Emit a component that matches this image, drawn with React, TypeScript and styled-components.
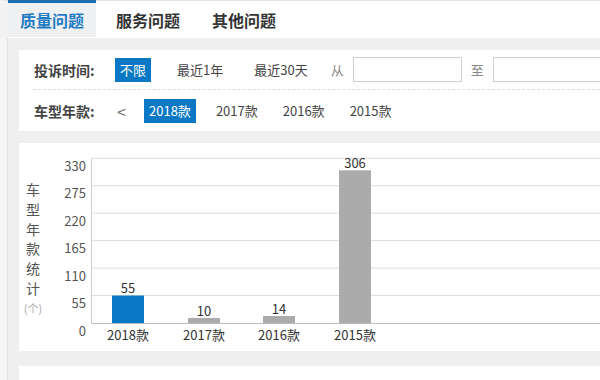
import { useState } from 'react';
import styled, { createGlobalStyle } from 'styled-components';

const GlobalStyle = createGlobalStyle`
  html, body {
    margin: 0;
    padding: 0;
    background: #f6f6f6;
    font-family: "Noto Sans CJK SC", "Noto Sans", sans-serif;
    overflow: hidden;
  }
  * { box-sizing: border-box; }
`;

const tabs = ['质量问题', '服务问题', '其他问题'];
const timeOptions = ['不限', '最近1年', '最近30天'];
const yearOptions = ['2018款', '2017款', '2016款', '2015款'];

const chartData = [
  { label: '2018款', value: 55 },
  { label: '2017款', value: 10 },
  { label: '2016款', value: 14 },
  { label: '2015款', value: 306 }
];

const BLUE = '#0a78c4';

// svg coords: page x - 61, page y - 143
const X0 = 30;
const Y0 = 180;
const STEP = 27.45;
const MAX = 330;
const barCenters = [67, 143, 218, 294];

const App = () => {
  const [activeTab, setActiveTab] = useState(0);
  const [time, setTime] = useState(0);
  const [year, setYear] = useState(0);

  const ticks = [0, 55, 110, 165, 220, 275, 330];

  return (
    <Page>
      <GlobalStyle />
      <TabBar>
        {tabs.map((t, i) => (
          <Tab key={t} $active={i === activeTab} onClick={() => setActiveTab(i)}>
            {t}
          </Tab>
        ))}
      </TabBar>

      <Content>
        <FilterPanel>
          <FilterRow>
            <FilterLabel>投诉时间:</FilterLabel>
            <Options $gap={21}>
              {timeOptions.map((o, i) => (
                <Option key={o} $active={i === time} onClick={() => setTime(i)}>
                  {o}
                </Option>
              ))}
            </Options>
            <Range>
              <RangeText>从</RangeText>
              <DateInput />
              <RangeText>至</RangeText>
              <DateInput />
            </Range>
          </FilterRow>
          <FilterRow $last>
            <FilterLabel>车型年款:</FilterLabel>
            <Options $gap={15}>
              <Arrow>&lt;</Arrow>
              {yearOptions.map((o, i) => (
                <Option key={o} $active={i === year} onClick={() => setYear(i)}>
                  {o}
                </Option>
              ))}
            </Options>
          </FilterRow>
        </FilterPanel>

        <ChartPanel>
          <AxisTitle>
            {'车型年款统计'.split('').map((c, i) => (
              <span key={i}>{c}</span>
            ))}
            <Unit>(个)</Unit>
          </AxisTitle>
          <ChartSvg width={539} height={208}>
            {ticks.map((t, i) => {
              const y = Y0 - i * STEP;
              return (
                <g key={t}>
                  {i > 0 && <line x1={X0} x2={539} y1={y} y2={y} stroke="#dcdcdc" strokeWidth={1} />}
                  <text x={25} y={y + 7} textAnchor="end" dominantBaseline="central" fontSize={13} fill="#555">
                    {t}
                  </text>
                </g>
              );
            })}
            <line x1={X0 + 0.5} x2={X0 + 0.5} y1={Y0 - 6 * STEP} y2={Y0} stroke="#cfcfcf" />
            <line x1={X0} x2={539} y1={Y0 + 0.5} y2={Y0 + 0.5} stroke="#bdbdbd" />
            {chartData.map((d, i) => {
              const h = (d.value / MAX) * (6 * STEP);
              const cx = barCenters[i];
              return (
                <g key={d.label}>
                  <rect x={cx - 16} y={Y0 - h} width={32} height={h} fill={i === 0 ? BLUE : '#ababab'} />
                  <text x={cx} y={Y0 - h - 8} textAnchor="middle" dominantBaseline="central" fontSize={13} fill="#333">
                    {d.value}
                  </text>
                  <text x={cx} y={Y0 + 11} textAnchor="middle" dominantBaseline="central" fontSize={13} fill="#333">
                    {d.label}
                  </text>
                </g>
              );
            })}
          </ChartSvg>
        </ChartPanel>

        <NextPanel />
      </Content>
    </Page>
  );
};

const Page = styled.div`
  width: 600px;
  height: 380px;
  display: flex;
  flex-direction: column;
`;

const TabBar = styled.div`
  display: flex;
  height: 38px;
  background: #fff;
  border-top: 1px solid #e2e2e2;
  border-left: 8px solid #f2f2f2;
`;

const Tab = styled.div<{ $active?: boolean }>`
  height: 100%;
  padding: 0 12px;
  margin-right: 8px;
  display: flex;
  align-items: center;
  font-size: 16px;
  font-weight: 600;
  margin-top: -1px;
  border-top: 3px solid ${p => (p.$active ? '#1b6fae' : 'transparent')};
  background: ${p => (p.$active ? '#eff0f1' : 'transparent')};
  color: ${p => (p.$active ? '#1f7cc4' : '#333')};
  cursor: pointer;
`;

const Content = styled.div`
  flex: 1;
  margin-left: 7px;
  border-left: 1px solid #e2e2e2;
  background: #efefef;
  padding: 12px 0 0 11px;
  display: flex;
  flex-direction: column;
`;

const FilterPanel = styled.div`
  background: #fff;
  padding-left: 14px;
  height: 81px;
  display: flex;
  flex-direction: column;
`;

const FilterRow = styled.div<{ $last?: boolean }>`
  height: ${p => (p.$last ? '41px' : '40px')};
  display: flex;
  align-items: center;
  border-bottom: ${p => (p.$last ? 'none' : '1px dashed #dcdcdc')};
  padding-left: 1px;
`;

const FilterLabel = styled.div`
  width: 81px;
  flex-shrink: 0;
  font-size: 14px;
  font-weight: 600;
  color: #444;
`;

const Options = styled.div<{ $gap: number }>`
  display: flex;
  align-items: center;
  gap: ${p => p.$gap}px;
`;

const Option = styled.span<{ $active?: boolean }>`
  height: 24px;
  line-height: 24px;
  padding: 0 5px;
  font-size: 13px;
  white-space: nowrap;
  background: ${p => (p.$active ? BLUE : 'transparent')};
  color: ${p => (p.$active ? '#fff' : '#444')};
  cursor: pointer;
`;

const Arrow = styled.span`
  width: 14px;
  padding-left: 2px;
  font-size: 16px;
  color: #777;
`;

const Range = styled.div`
  display: flex;
  align-items: center;
  gap: 9px;
  margin-left: 18px;
  flex: 1;
  min-width: 0;
`;

const RangeText = styled.span`
  font-size: 13px;
  color: #888;
  flex-shrink: 0;
`;

const DateInput = styled.input`
  width: 109px;
  height: 25px;
  border: 1px solid #cfcfcf;
  flex-shrink: 0;
  outline: none;
`;

const ChartPanel = styled.div`
  margin-top: 12px;
  height: 208px;
  background: #fff;
  display: flex;
`;

const AxisTitle = styled.div`
  width: 42px;
  padding-top: 37px;
  padding-left: 7px;
  display: flex;
  flex-direction: column;
  align-items: flex-start;
  font-size: 14px;
  line-height: 19.8px;
  color: #555;

  span {
    width: 14px;
    text-align: center;
  }
`;

const Unit = styled.span`
  && {
    width: 20px;
    margin-left: -3px;
  }
  font-size: 11px;
  color: #aaa;
`;

const ChartSvg = styled.svg`
  display: block;
  font-family: "Noto Sans CJK SC", "Noto Sans", sans-serif;
`;

const NextPanel = styled.div`
  margin-top: 15px;
  flex: 1;
  background: #fff;
`;

export default App;
